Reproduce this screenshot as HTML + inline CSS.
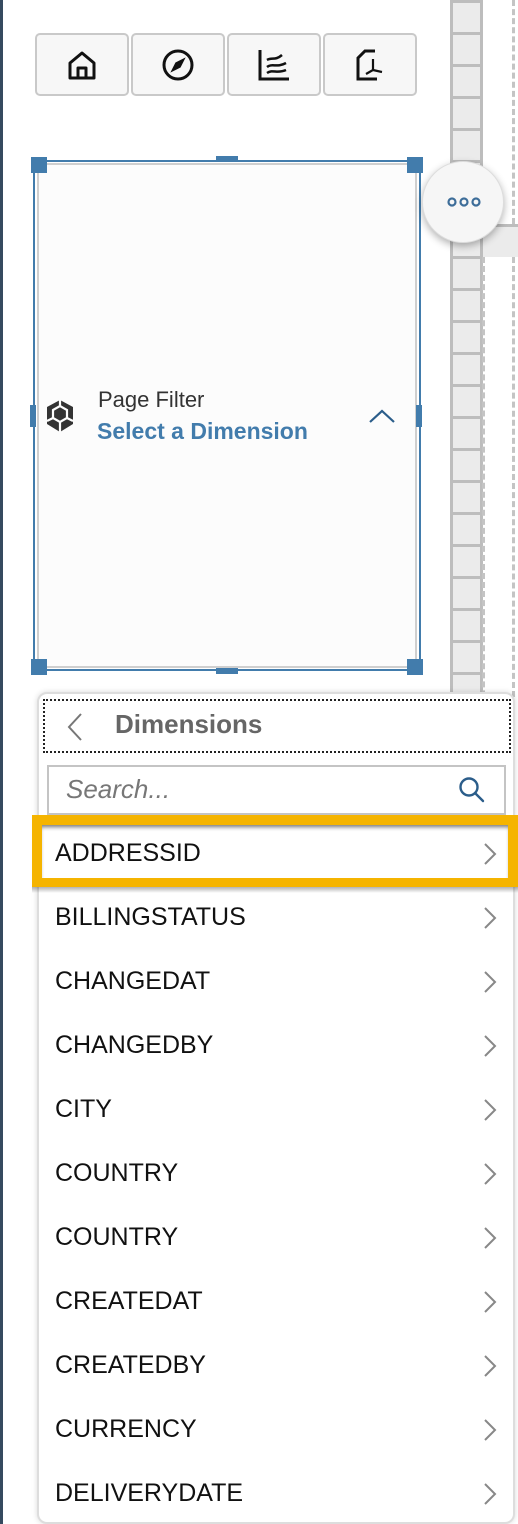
<!DOCTYPE html>
<html><head><meta charset="utf-8"><style>
*{margin:0;padding:0;box-sizing:border-box}
html,body{width:518px;height:1524px;overflow:hidden;background:#fff;font-family:"Liberation Sans",sans-serif;position:relative}
.abs{position:absolute}
.edge{left:0;top:0;width:3px;height:1524px;background:#354a5f}
.panel{left:3px;top:0;width:446px;height:1524px;background:#fff;border-top-right-radius:14px}
.strip{left:450px;top:0;width:33px;height:1524px;background:#bdbdbd}
.cell{position:absolute;left:3px;width:27px;height:29px;background:#ebebeb}
.dash{border-left:3px dashed #c4c4c4}
.btn{top:33px;width:94px;height:63px;background:#f7f7f7;border:2px solid #c9c9c9;border-radius:5px;display:flex;align-items:center;justify-content:center}
.sel{left:33px;top:160px;width:388px;height:511px;border:2px solid #427cac}
.card{left:37px;top:163px;width:380px;height:505px;border:2px solid #cfcfcf;border-radius:9px;background:#fcfcfc}
.h{background:#427cac}
.circ{left:422px;top:161px;width:82px;height:82px;border-radius:50%;background:#f6f6f6;box-shadow:0 3px 8px rgba(0,0,0,.3);border:1px solid #ddd}
.pop{left:37px;top:692px;width:478px;height:832px;background:#fff;border-radius:10px;border:2px solid #ddd;box-shadow:0 0 6px rgba(0,0,0,.15)}
.row{position:absolute;left:37px;width:476px;height:64px;font-size:25px;color:#111;line-height:64px;padding-left:18px}
.row svg{position:absolute;left:446px;top:21px}
</style></head><body>
<div class="abs edge"></div>
<div class="abs strip">
<div class="cell" style="top:3px"></div><div class="cell" style="top:35px"></div><div class="cell" style="top:67px"></div><div class="cell" style="top:99px"></div><div class="cell" style="top:131px"></div><div class="cell" style="top:163px"></div><div class="cell" style="top:195px"></div><div class="cell" style="top:227px"></div><div class="cell" style="top:259px"></div><div class="cell" style="top:291px"></div><div class="cell" style="top:323px"></div><div class="cell" style="top:355px"></div><div class="cell" style="top:387px"></div><div class="cell" style="top:419px"></div><div class="cell" style="top:451px"></div><div class="cell" style="top:483px"></div><div class="cell" style="top:515px"></div><div class="cell" style="top:547px"></div><div class="cell" style="top:579px"></div><div class="cell" style="top:611px"></div><div class="cell" style="top:643px"></div><div class="cell" style="top:675px"></div>
</div>
<div class="abs" style="left:483px;top:224px;width:35px;height:33px;background:#ebebeb;border-top:3px solid #bdbdbd"></div>
<div class="abs dash" style="left:482px;top:257px;height:1270px"></div>
<div class="abs dash" style="left:512px;top:0;height:224px"></div>
<div class="abs dash" style="left:512px;top:257px;height:440px"></div>
<div class="abs panel"></div>

<div class="abs btn" style="left:35px"><svg width="32" height="32" viewBox="0 0 32 32" fill="none" stroke="#111" stroke-width="3" stroke-linejoin="round"><path d="M4 14 L16 4 L28 14 V29 H4 Z"/><path d="M12 29 V19 H20 V29"/></svg></div>
<div class="abs btn" style="left:131px"><svg width="34" height="34" viewBox="0 0 34 34" fill="none" stroke="#111" stroke-width="3"><circle cx="17" cy="17" r="14"/><path d="M23 11 L19 19 L11 23 L15 15 Z" fill="#111" stroke-width="1.5"/></svg></div>
<div class="abs btn" style="left:227px"><svg width="34" height="34" viewBox="0 0 34 34" fill="none" stroke="#111" stroke-width="3"><path d="M3 2 V31 H32"/><path d="M10 12 C15 9,18 13,25 7 M10 19 C15 15,20 20,29 15 M10 25 C16 21,20 26,29 22" stroke-width="2.5"/></svg></div>
<div class="abs btn" style="left:323px"><svg width="34" height="34" viewBox="0 0 34 34" fill="none" stroke="#111" stroke-width="3"><path d="M22 3 H12 L5 10 V31 H24"/><path d="M20 11 V22 L13 26 M20 22 L29 24" stroke-width="2.2"/></svg></div>

<div class="abs sel"></div>
<div class="abs card"></div>
<div class="abs h" style="left:31px;top:157px;width:16px;height:16px"></div>
<div class="abs h" style="left:407px;top:157px;width:16px;height:16px"></div>
<div class="abs h" style="left:31px;top:659px;width:16px;height:16px"></div>
<div class="abs h" style="left:407px;top:659px;width:16px;height:16px"></div>
<div class="abs h" style="left:216px;top:156px;width:22px;height:6px"></div>
<div class="abs h" style="left:216px;top:668px;width:22px;height:6px"></div>
<div class="abs h" style="left:30px;top:405px;width:6px;height:22px"></div>
<div class="abs h" style="left:416px;top:405px;width:6px;height:22px"></div>

<svg class="abs" style="left:45px;top:399px" width="30" height="34" viewBox="0 0 30 34"><g fill="#333"><path d="M15 1 L28 8 V25 L15 33 L2 25 V8 Z"/></g><g stroke="#fcfcfc" stroke-width="2.2" fill="none"><path d="M8 11 L15 7 L22 11 V19 L15 23 L8 19 Z"/><path d="M2 22 L8 19 M28 22 L22 19 M15 23 V33 M15 1 V7"/></g></svg>
<div class="abs" style="left:98px;top:387px;font-size:22px;color:#333">Page Filter</div>
<div class="abs" style="left:97px;top:418px;font-size:23px;color:#427cac;font-weight:bold">Select a Dimension</div>
<svg class="abs" style="left:368px;top:408px" width="28" height="16" viewBox="0 0 28 16"><path d="M2 14 L14 3 L26 14" fill="none" stroke="#2b5d8a" stroke-width="2.2"/></svg>

<div class="abs circ"><svg style="position:absolute;left:24px;top:34px" width="34" height="12" viewBox="0 0 34 12" fill="none" stroke="#3d6d99" stroke-width="2.2"><circle cx="5" cy="6" r="3.5"/><circle cx="17" cy="6" r="3.5"/><circle cx="29" cy="6" r="3.5"/></svg></div>

<div class="abs pop"></div>
<div class="abs" style="left:43px;top:699px;width:468px;height:54px;border:2px dotted #222"></div>
<svg class="abs" style="left:66px;top:712px" width="18" height="30" viewBox="0 0 18 30"><path d="M15 2 L3 15 L15 28" fill="none" stroke="#777" stroke-width="2"/></svg>
<div class="abs" style="left:115px;top:709px;font-size:26px;font-weight:bold;color:#666">Dimensions</div>
<div class="abs" style="left:47px;top:765px;width:459px;height:50px;border:2px solid #c4c4c4;background:#fff"></div>
<div class="abs" style="left:66px;top:774px;font-size:26px;font-style:italic;color:#777">Search...</div>
<svg class="abs" style="left:458px;top:776px" width="28" height="28" viewBox="0 0 28 28" fill="none" stroke="#2b5d8a" stroke-width="2.4"><circle cx="11" cy="11" r="8.5"/><path d="M17 17 L25 25" stroke-linecap="round"/></svg>

<div class="abs" style="left:32px;top:815px;width:486px;height:72px;background:#f5b400"></div>
<div class="abs" style="left:42px;top:825px;width:466px;height:53px;background:#fff;box-shadow:inset 0 4px 4px -2px rgba(0,0,0,.55)"></div>
<div class="abs" style="left:32px;top:887px;width:486px;height:6px;background:linear-gradient(rgba(0,0,0,.3),rgba(0,0,0,0))"></div>

<div class="row" style="top:821px">ADDRESSID<svg width="14" height="24" viewBox="0 0 14 24"><path d="M2 2 L12 12 L2 22" fill="none" stroke="#888" stroke-width="2"/></svg></div>
<div class="row" style="top:885px">BILLINGSTATUS<svg width="14" height="24" viewBox="0 0 14 24"><path d="M2 2 L12 12 L2 22" fill="none" stroke="#888" stroke-width="2"/></svg></div>
<div class="row" style="top:949px">CHANGEDAT<svg width="14" height="24" viewBox="0 0 14 24"><path d="M2 2 L12 12 L2 22" fill="none" stroke="#888" stroke-width="2"/></svg></div>
<div class="row" style="top:1013px">CHANGEDBY<svg width="14" height="24" viewBox="0 0 14 24"><path d="M2 2 L12 12 L2 22" fill="none" stroke="#888" stroke-width="2"/></svg></div>
<div class="row" style="top:1077px">CITY<svg width="14" height="24" viewBox="0 0 14 24"><path d="M2 2 L12 12 L2 22" fill="none" stroke="#888" stroke-width="2"/></svg></div>
<div class="row" style="top:1141px">COUNTRY<svg width="14" height="24" viewBox="0 0 14 24"><path d="M2 2 L12 12 L2 22" fill="none" stroke="#888" stroke-width="2"/></svg></div>
<div class="row" style="top:1205px">COUNTRY<svg width="14" height="24" viewBox="0 0 14 24"><path d="M2 2 L12 12 L2 22" fill="none" stroke="#888" stroke-width="2"/></svg></div>
<div class="row" style="top:1269px">CREATEDAT<svg width="14" height="24" viewBox="0 0 14 24"><path d="M2 2 L12 12 L2 22" fill="none" stroke="#888" stroke-width="2"/></svg></div>
<div class="row" style="top:1333px">CREATEDBY<svg width="14" height="24" viewBox="0 0 14 24"><path d="M2 2 L12 12 L2 22" fill="none" stroke="#888" stroke-width="2"/></svg></div>
<div class="row" style="top:1397px">CURRENCY<svg width="14" height="24" viewBox="0 0 14 24"><path d="M2 2 L12 12 L2 22" fill="none" stroke="#888" stroke-width="2"/></svg></div>
<div class="row" style="top:1461px">DELIVERYDATE<svg width="14" height="24" viewBox="0 0 14 24"><path d="M2 2 L12 12 L2 22" fill="none" stroke="#888" stroke-width="2"/></svg></div>
</body></html>
